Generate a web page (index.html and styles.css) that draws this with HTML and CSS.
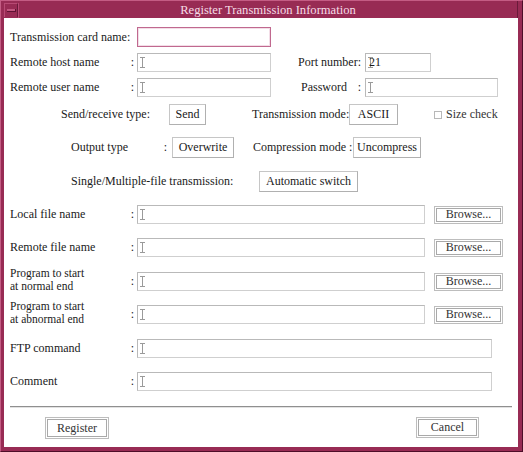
FILE: index.html
```html
<!DOCTYPE html>
<html>
<head>
<meta charset="utf-8">
<link rel="stylesheet" href="styles.css">
</head>
<body>
<div class="window">
  <div class="titlebar">
    <div class="menu-btn"><span class="menu-bar"></span></div>
    <div class="title">Register Transmission Information</div>
  </div>
  <div class="client">
    <div class="row r1">
      <span class="lbl">Transmission card name:</span>
      <span class="input focus w134 h20"></span>
    </div>
    <div class="row r2">
      <span class="lbl"><span>Remote host name</span><span>:</span></span>
      <span class="input w134"><svg class="ibeam" viewBox="0 0 5 11" width="5" height="11"><path d="M0 0.5h5M2.5 0.5v10M0 10.5h5"/></svg></span>
      <span class="lbl-r"><span>Port number:</span></span>
      <span class="input w66"><svg class="ibeam" viewBox="0 0 5 11" width="5" height="11"><path d="M0 0.5h5M2.5 0.5v10M0 10.5h5"/></svg><span class="val">21</span></span>
    </div>
    <div class="row r3">
      <span class="lbl"><span>Remote user name</span><span>:</span></span>
      <span class="input w134"><svg class="ibeam" viewBox="0 0 5 11" width="5" height="11"><path d="M0 0.5h5M2.5 0.5v10M0 10.5h5"/></svg></span>
      <span class="lbl-r pw"><span>Password</span><span>:</span></span>
      <span class="input w133"><svg class="ibeam" viewBox="0 0 5 11" width="5" height="11"><path d="M0 0.5h5M2.5 0.5v10M0 10.5h5"/></svg></span>
    </div>
    <div class="row r4">
      <span class="opt-lbl sr">Send/receive type:</span>
      <span class="btn w37">Send</span>
      <span class="opt-lbl tm">Transmission mode:</span>
      <span class="btn w49">ASCII</span>
      <span class="check"><span class="box"></span>Size check</span>
    </div>
    <div class="row r5">
      <span class="opt-lbl ot"><span>Output type</span><span>:</span></span>
      <span class="btn w62">Overwrite</span>
      <span class="opt-lbl cm">Compression mode :</span>
      <span class="btn w68">Uncompress</span>
    </div>
    <div class="row r6">
      <span class="opt-lbl sm">Single/Multiple-file transmission:</span>
      <span class="btn w99">Automatic switch</span>
    </div>
    <div class="row r7">
      <span class="lbl"><span>Local file name</span><span>:</span></span>
      <span class="input w288"><svg class="ibeam" viewBox="0 0 5 11" width="5" height="11"><path d="M0 0.5h5M2.5 0.5v10M0 10.5h5"/></svg></span>
      <span class="btn2">Browse...</span>
    </div>
    <div class="row r8">
      <span class="lbl"><span>Remote file name</span><span>:</span></span>
      <span class="input w288"><svg class="ibeam" viewBox="0 0 5 11" width="5" height="11"><path d="M0 0.5h5M2.5 0.5v10M0 10.5h5"/></svg></span>
      <span class="btn2">Browse...</span>
    </div>
    <div class="row r9">
      <span class="lbl two"><span class="lines">Program to start<br>at normal end</span><span class="colon">:</span></span>
      <span class="input w288"><svg class="ibeam" viewBox="0 0 5 11" width="5" height="11"><path d="M0 0.5h5M2.5 0.5v10M0 10.5h5"/></svg></span>
      <span class="btn2">Browse...</span>
    </div>
    <div class="row r10">
      <span class="lbl two"><span class="lines">Program to start<br>at abnormal end</span><span class="colon">:</span></span>
      <span class="input w288"><svg class="ibeam" viewBox="0 0 5 11" width="5" height="11"><path d="M0 0.5h5M2.5 0.5v10M0 10.5h5"/></svg></span>
      <span class="btn2">Browse...</span>
    </div>
    <div class="row r11">
      <span class="lbl"><span>FTP command</span><span>:</span></span>
      <span class="input w355"><svg class="ibeam" viewBox="0 0 5 11" width="5" height="11"><path d="M0 0.5h5M2.5 0.5v10M0 10.5h5"/></svg></span>
    </div>
    <div class="row r12">
      <span class="lbl"><span>Comment</span><span>:</span></span>
      <span class="input w355"><svg class="ibeam" viewBox="0 0 5 11" width="5" height="11"><path d="M0 0.5h5M2.5 0.5v10M0 10.5h5"/></svg></span>
    </div>
    <div class="sep"></div>
    <div class="actions">
      <span class="btn2 reg">Register</span>
      <span class="btn2 can">Cancel</span>
    </div>
  </div>
</div>
</body>
</html>
```
FILE: styles.css
```css
* { box-sizing: border-box; }
html, body { margin: 0; padding: 0; background: #ffffff; }
body {
  font-family: "Liberation Serif", "Times New Roman", serif;
  font-size: 12px;
  color: #1a1a1a;
}
.window {
  width: 523px;
  height: 452px;
  background: #982b54;
  border-top: 1px solid #c45c84;
  border-left: 1px solid #c45c84;
  border-right: 1px solid #4e0e29;
  border-bottom: 1px solid #4e0e29;
  padding: 0 4px 4px 3px;
  display: flex;
  flex-direction: column;
}
.titlebar {
  height: 17px;
  display: flex;
  align-items: stretch;
  padding-top: 2px;
  border-right: 1px solid #6a1a3a;
}
.menu-btn {
  width: 14px;
  height: 14px;
  border: 1px solid #b84a74;
  border-right-color: #6a1a3a;
  border-bottom: none;
  display: flex;
  align-items: center;
  justify-content: center;
}
.menu-bar {
  width: 9px;
  height: 3px;
  background: #c25780;
  border-bottom: 1px solid #5e1232;
  border-right: 1px solid #5e1232;
}
.title {
  flex: 1;
  text-align: center;
  color: #f5dbe6;
  font-size: 12.6px;
  line-height: 15px;
  border-left: 1px solid #b84a74;
}
.client {
  background: #ffffff;
  height: 429px;
  padding: 9px 6px 0 6px;
}
.row {
  display: flex;
  align-items: center;
  white-space: nowrap;
}
.r1 { height: 20px; }
.r2 { margin-top: 6px; height: 19px; }
.r3 { margin-top: 6px; height: 19px; }
.r4 { margin-top: 7px; height: 21px; }
.r5 { margin-top: 12px; height: 21px; }
.r6 { margin-top: 13px; height: 21px; }
.r7 { margin-top: 13px; height: 19px; }
.r8 { margin-top: 14px; height: 19px; }
.r9 { margin-top: 15px; height: 19px; }
.r10 { margin-top: 14px; height: 19px; }
.r11 { margin-top: 15px; height: 19px; }
.r12 { margin-top: 14px; height: 19px; }

.lbl {
  width: 127px;
  display: flex;
  justify-content: space-between;
  padding-right: 3px;
}
.lbl.two {
  align-self: stretch;
  align-items: flex-start;
}
.lbl.two .lines {
  font-size: 11.5px;
  line-height: 12.5px;
  margin-top: -5px;
}
.lbl.two .colon {
  align-self: center;
}
.lbl-r {
  width: 67px;
  margin-left: 27px;
  display: flex;
  justify-content: space-between;
}
.lbl-r.pw { padding-right: 4px; padding-left: 3px; }

.input {
  height: 19px;
  border: 1px solid #cfcfcf;
  border-top-color: #b9b9b9;
  border-left-color: #b9b9b9;
  background: #ffffff;
  display: flex;
  align-items: center;
  padding-left: 2px;
  color: #1a1a1a;
}
.input .val { margin-left: -4px; }
.input.focus {
  border: 1px solid #c0698f;
  box-shadow: inset 0 0 0 1px #f3dde7;
}
.h20 { height: 20px; }
.w66 { width: 66px; }
.w133 { width: 133px; }
.w134 { width: 134px; }
.w288 { width: 288px; }
.w355 { width: 355px; }
.ibeam { stroke: #9a9a9a; stroke-width: 1; fill: none; }

.opt-lbl { display: inline-flex; justify-content: space-between; }
.sr { margin-left: 51px; width: 108px; }
.tm { margin-left: 46px; width: 97px; }
.ot { margin-left: 61px; width: 101px; padding-right: 5px; }
.cm { margin-left: 19px; width: 100px; }
.sm { margin-left: 61px; width: 188px; }

.btn {
  height: 21px;
  border: 1px solid #c6c6c6;
  border-right-color: #b0b0b0;
  border-bottom-color: #b0b0b0;
  background: #ffffff;
  display: inline-flex;
  align-items: center;
  justify-content: center;
}
.w37 { width: 37px; }
.w49 { width: 49px; }
.w62 { width: 62px; }
.w68 { width: 68px; }
.w99 { width: 99px; }

.check {
  margin-left: 36px;
  display: inline-flex;
  align-items: center;
  color: #333;
}
.check .box {
  width: 8px;
  height: 8px;
  border: 1px solid #b8b8b8;
  margin-right: 4px;
  background: #fff;
}

.btn2 {
  width: 69px;
  height: 18px;
  margin-left: 9px;
  border: 1px solid #bdbdbd;
  box-shadow: inset 0 0 0 1px #ffffff, inset 0 0 0 2px #a9a9a9;
  background: #ffffff;
  display: inline-flex;
  align-items: center;
  justify-content: center;
  color: #333;
}

.sep {
  margin-top: 15px;
  height: 2px;
  border-top: 1px solid #8f8f8f;
  border-bottom: 1px solid #e2e2e2;
}
.actions {
  margin-top: 9px;
  display: flex;
  justify-content: space-between;
  padding-left: 35px;
  padding-right: 33px;
}
.btn2.reg { margin-left: 0; width: 64px; height: 22px; }
.btn2.can { margin-left: 0; width: 63px; height: 21px; }
```
